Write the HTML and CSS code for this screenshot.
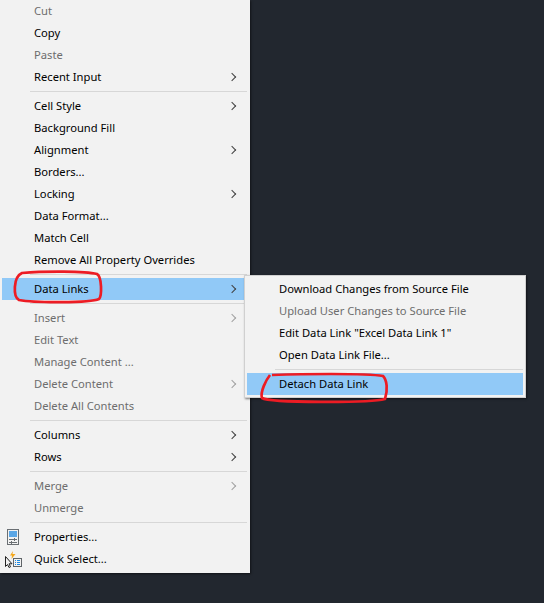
FILE: index.html
```html
<!doctype html>
<html>
<head>
<meta charset="utf-8">
<title>Data Links menu</title>
<link rel="stylesheet" href="styles.css">
</head>

<body>
<div class="menu">
	<div class="item off">Cut</div>
	<div class="item">Copy</div>
	<div class="item off">Paste</div>
	<div class="item more">Recent Input</div>
	<div class="sep"></div>
	<div class="item more">Cell Style</div>
	<div class="item">Background Fill</div>
	<div class="item more">Alignment</div>
	<div class="item">Borders...</div>
	<div class="item more">Locking</div>
	<div class="item">Data Format...</div>
	<div class="item">Match Cell</div>
	<div class="item">Remove All Property Overrides</div>
	<div class="sep"></div>
	<div class="item more cur">Data Links</div>
	<div class="sep"></div>
	<div class="item more off">Insert</div>
	<div class="item off">Edit Text</div>
	<div class="item off">Manage Content ...</div>
	<div class="item more off">Delete Content</div>
	<div class="item off">Delete All Contents</div>
	<div class="sep"></div>
	<div class="item more">Columns</div>
	<div class="item more">Rows</div>
	<div class="sep"></div>
	<div class="item more off">Merge</div>
	<div class="item off">Unmerge</div>
	<div class="sep"></div>
	<div class="item">
		<svg class="ico" width="18" height="18" viewBox="0 0 18 18">
			<rect x="3.500" y="1.500" width="11" height="15" fill="#f2f2f2" stroke="#6a6f73"/>
			<rect x="5" y="3" width="8" height="6" fill="#5ba7e6"/>
			<path d="M5 11.500h8M5 14.500h8M10.500 10v3M7.500 13v3" stroke="#6a6f73" fill="none"/>
		</svg>
		Properties...
	</div>
	<div class="item">
		<svg class="ico" width="18" height="18" viewBox="0 0 18 18">
			<path d="M6 5.500l3-4.500 -.5 3h3l-4 5 .5-3.500z" fill="#f5a81c"/>
			<rect x="9.500" y="8.500" width="8" height="8" fill="#f2f2f2" stroke="#5f6468"/>
			<path d="M11 10.500h1M11 12.500h1M11 14.500h1M13 10.500h3M13 12.500h3M13 14.500h3" stroke="#1f8ae0" fill="none"/>
			<path d="M1.500 6.500v10l2-2 1.500 3 1.500-.7-1.500-3h3z" fill="#f2f2f2" stroke="#222"/>
		</svg>
		Quick Select...
	</div>
</div>

<div class="menu sub">
	<div class="item">Download Changes from Source File</div>
	<div class="item off">Upload User Changes to Source File</div>
	<div class="item">Edit Data Link "Excel Data Link 1"</div>
	<div class="item">Open Data Link File...</div>
	<div class="sep"></div>
	<div class="item cur">Detach Data Link</div>
</div>

<svg class="marks" width="544" height="603" viewBox="0 0 544 603">
	<path d="M22 273C45 271 85 271 97 274C102 277 102 296 99 299C90 303 35 303 19 300C13 297 13 277 22 273Z"/>
	<path d="M270 375C266 380 260 392 262 398C270 403 370 403 385 399C388 390 387 380 383 376C365 373 300 374 272 375"/>
</svg>
</body>
</html>
```

FILE: styles.css
```css
*{margin:0; padding:0; box-sizing:border-box;}
body{background:#22272f; width:544px; height:603px; overflow:hidden; position:relative; font-family:"Noto Sans","Liberation Sans",sans-serif; font-size:11.2px; color:#000;}

.menu{width:250px; height:573px; background:#f2f2f2; padding:0 3px 3px 2px; box-shadow:1px 1px 2px rgba(0,0,0,.5);}
.item{position:relative; height:22px; line-height:21px; padding-left:32px; white-space:nowrap;}
.off{color:#6d6d6d;}
.cur{background:#91c9f7;}
.sep{height:7px; margin-left:28px; position:relative;}
.sep:after{content:""; position:absolute; left:0; right:0; top:3px; height:1px; background:#d7d7d7;}

.more:after{content:""; position:absolute; right:12px; top:8px; width:5px; height:5px; border-top:1px solid #404040; border-right:1px solid #404040; transform:rotate(45deg);}
.more.off:after{border-color:#a0a0a0;}

.ico{position:absolute; left:2px; top:2px;}

.sub{position:absolute; left:244px; top:275px; width:282px; height:123px; padding:2px; border:1px solid #d0d0d0;}
.sub .item{padding-left:32px;}
.sub .sep{margin-left:28px;}

.marks{position:absolute; left:0; top:0;}
.marks path{fill:none; stroke:#ed1c24; stroke-width:2.700;}
```
